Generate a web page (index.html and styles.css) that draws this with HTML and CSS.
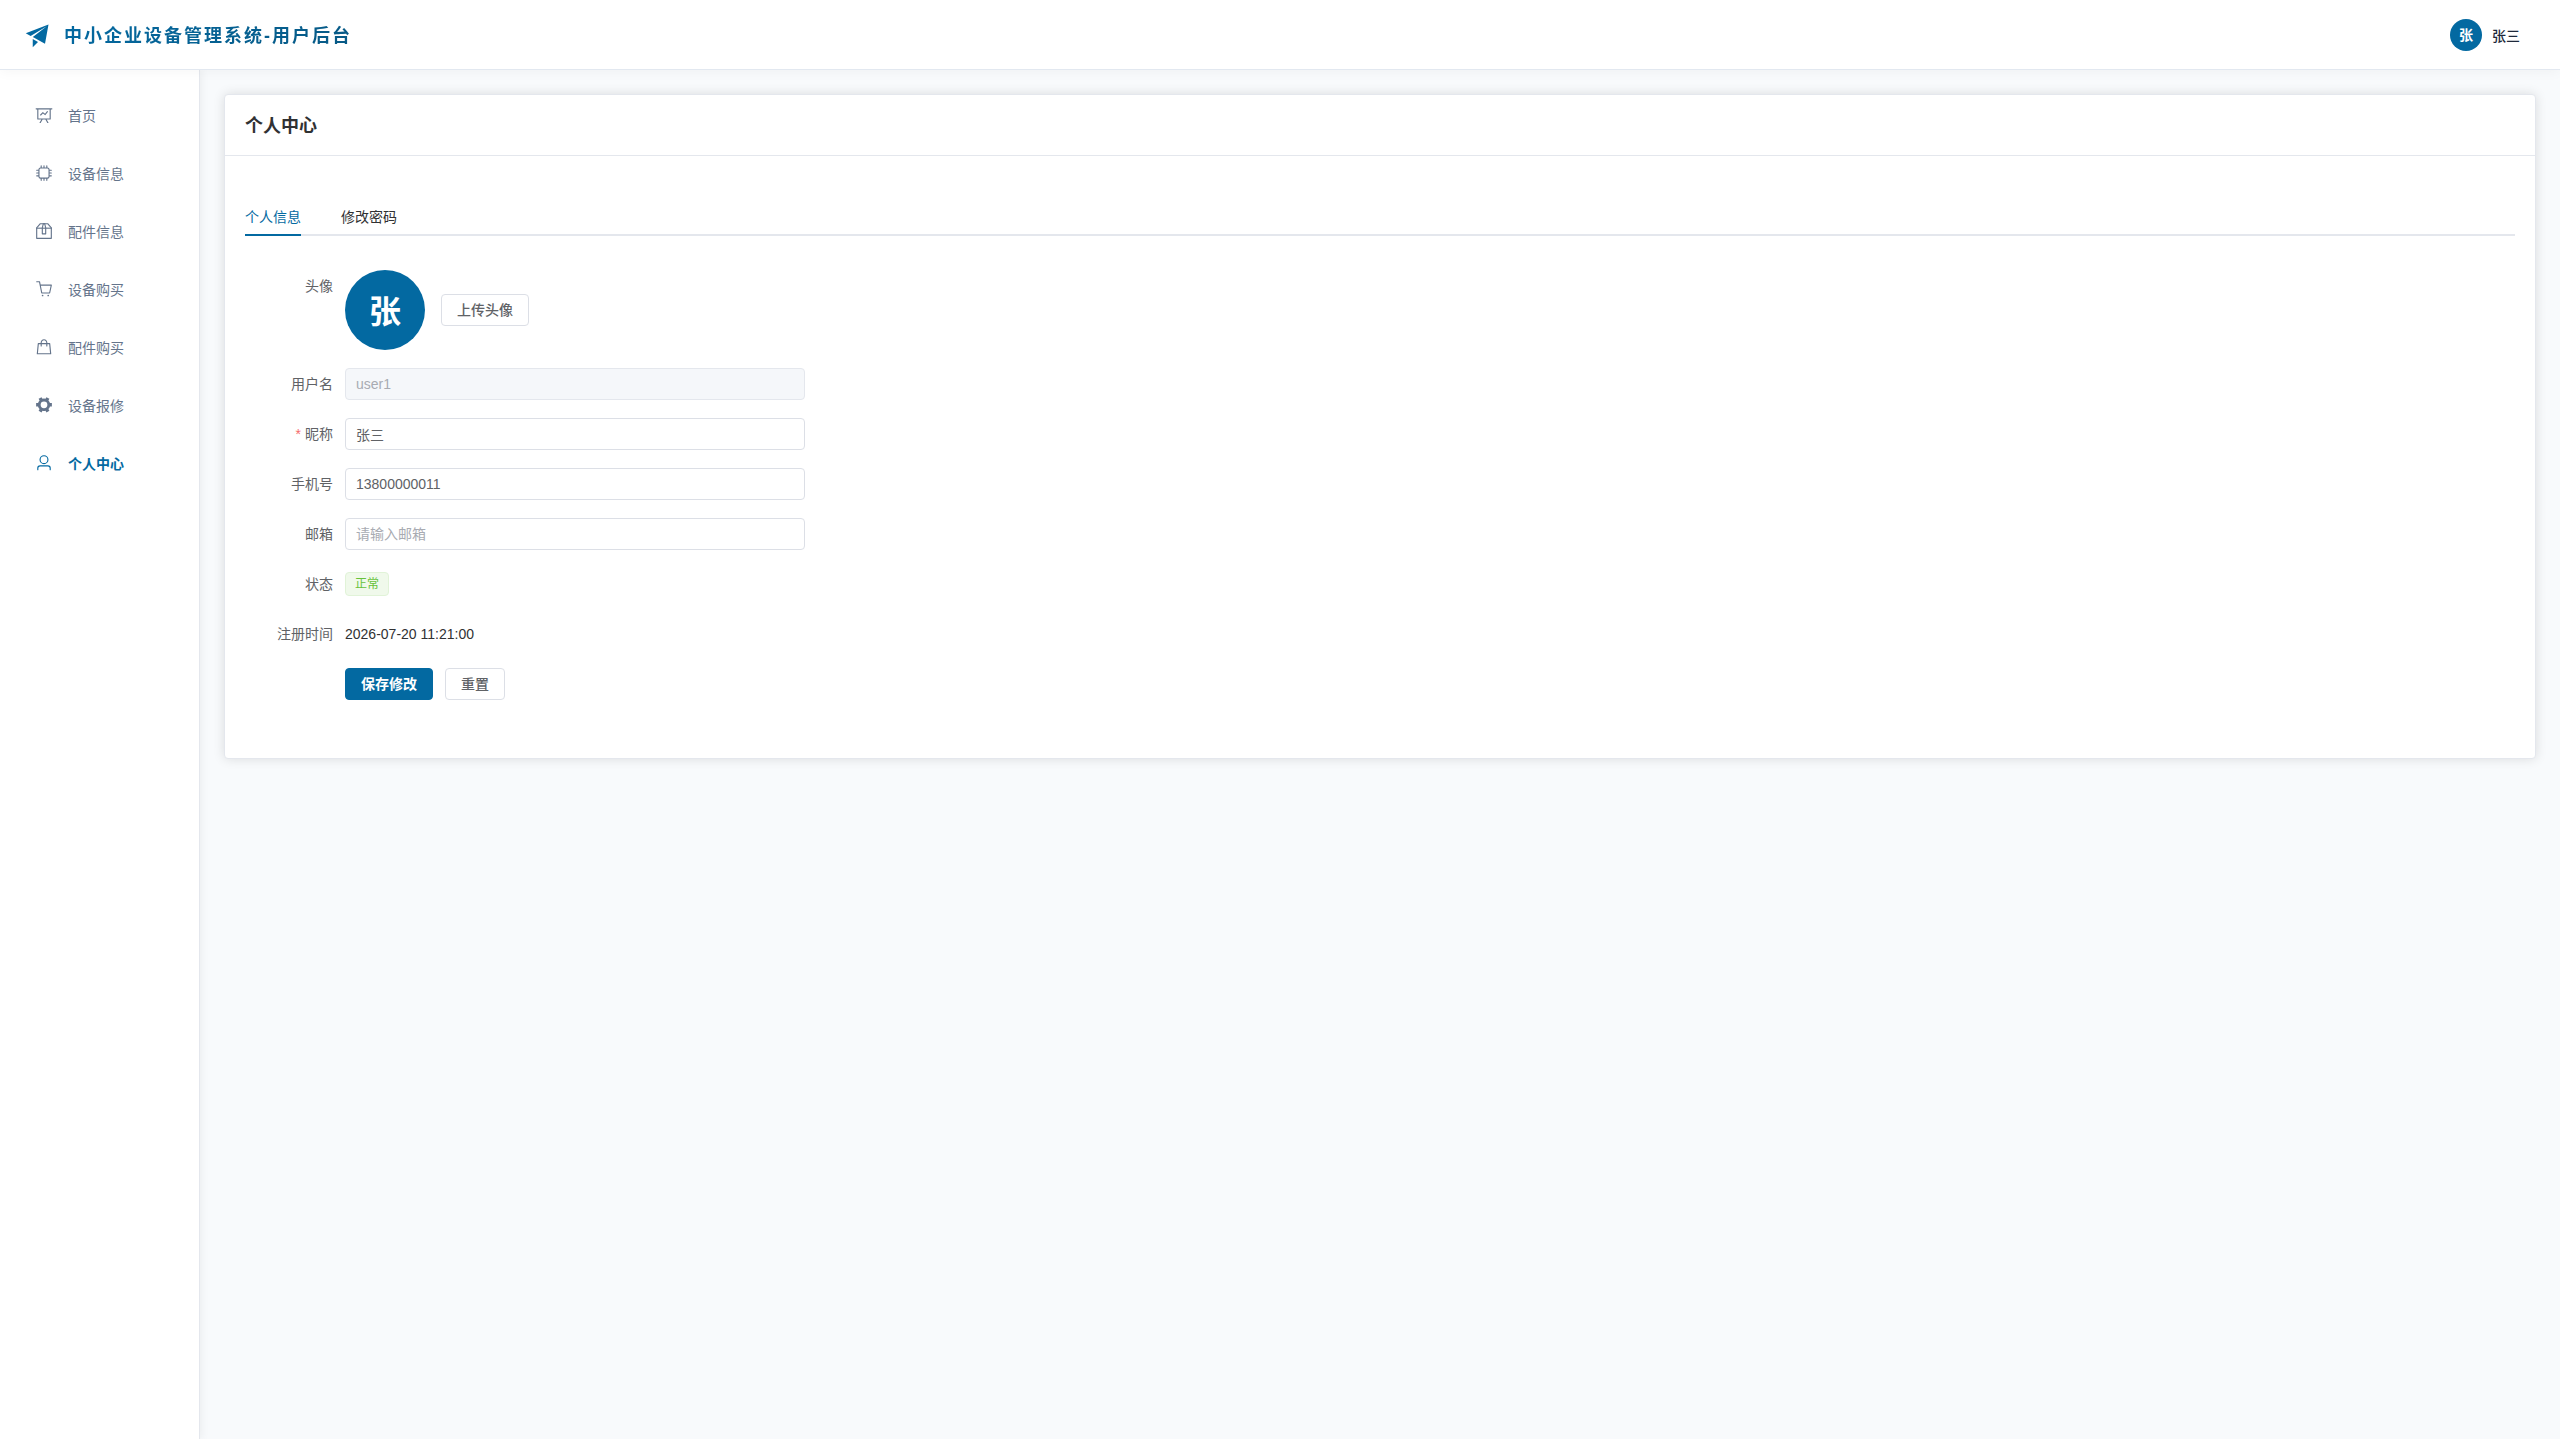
FILE: index.html
```html
<!DOCTYPE html>
<html lang="zh-CN">
<head>
    <meta charset="UTF-8">
    <meta name="viewport" content="width=device-width, initial-scale=1.0">
    <title>个人中心</title>
    <link rel="stylesheet" href="styles.css">
</head>
<body>
    <header class="header">
        <div class="logo">
            <svg class="logo-icon" viewBox="0 0 1024 1024"><path d="m64 448 832-320-128 704-446.08-243.328L832 192 242.816 545.536 64 448zm256 512V657.024L512 768 320 960z"/></svg>
            <span class="logo-text">中小企业设备管理系统-用户后台</span>
        </div>
        <button type="button" class="user">
            <span class="avatar">张</span>
            <span class="user-name">张三</span>
        </button>
    </header>

    <div class="layout">
        <nav class="sidebar">
            <a class="menu-item" href="#">
                <svg class="icon" viewBox="0 0 1024 1024"><path d="M359.168 768H160a32 32 0 0 1-32-32V192H64a32 32 0 0 1 0-64h896a32 32 0 1 1 0 64h-64v544a32 32 0 0 1-32 32H665.216l110.848 192h-73.856L591.36 768H433.024L322.176 960H248.32l110.848-192zM832 192H192v512h640V192zM342.656 534.656a32 32 0 1 1-45.312-45.312L444.992 341.76l125.44 94.08L679.04 300.032a32 32 0 1 1 49.92 39.936L581.632 524.224 451.008 426.24 342.656 534.592z"/></svg>
                <span>首页</span>
            </a>
            <a class="menu-item" href="#">
                <svg class="icon" viewBox="0 0 1024 1024"><path d="M320 256a64 64 0 0 0-64 64v384a64 64 0 0 0 64 64h384a64 64 0 0 0 64-64V320a64 64 0 0 0-64-64H320zm0-64h384a128 128 0 0 1 128 128v384a128 128 0 0 1-128 128H320a128 128 0 0 1-128-128V320a128 128 0 0 1 128-128z"/><path d="M512 64a32 32 0 0 1 32 32v128h-64V96a32 32 0 0 1 32-32zm160 0a32 32 0 0 1 32 32v128h-64V96a32 32 0 0 1 32-32zm-320 0a32 32 0 0 1 32 32v128h-64V96a32 32 0 0 1 32-32zm160 896a32 32 0 0 1-32-32V800h64v128a32 32 0 0 1-32 32zm160 0a32 32 0 0 1-32-32V800h64v128a32 32 0 0 1-32 32zm-320 0a32 32 0 0 1-32-32V800h64v128a32 32 0 0 1-32 32zM64 512a32 32 0 0 1 32-32h128v64H96a32 32 0 0 1-32-32zm0-160a32 32 0 0 1 32-32h128v64H96a32 32 0 0 1-32-32zm0 320a32 32 0 0 1 32-32h128v64H96a32 32 0 0 1-32-32zm896-160a32 32 0 0 1-32 32H800v-64h128a32 32 0 0 1 32 32zm0-160a32 32 0 0 1-32 32H800v-64h128a32 32 0 0 1 32 32zm0 320a32 32 0 0 1-32 32H800v-64h128a32 32 0 0 1 32 32z"/></svg>
                <span>设备信息</span>
            </a>
            <a class="menu-item" href="#">
                <svg class="icon" viewBox="0 0 1024 1024"><path d="M317.056 128 128 344.064V896h768V344.064L706.944 128H317.056zm-14.528-64h418.944a32 32 0 0 1 24.064 10.88l206.528 236.096A32 32 0 0 1 960 332.032V928a32 32 0 0 1-32 32H96a32 32 0 0 1-32-32V332.032a32 32 0 0 1 7.936-21.12L278.4 75.008A32 32 0 0 1 302.528 64z"/><path d="M64 320h896v64H64z"/><path d="M448 327.872V640h128V327.872L526.08 128h-28.16L448 327.872zM448 64h128l64 256v352a32 32 0 0 1-32 32H416a32 32 0 0 1-32-32V320l64-256z"/></svg>
                <span>配件信息</span>
            </a>
            <a class="menu-item" href="#">
                <svg class="icon" viewBox="0 0 1024 1024"><path d="M432 928a48 48 0 1 1 0-96 48 48 0 0 1 0 96zm320 0a48 48 0 1 1 0-96 48 48 0 0 1 0 96zM96 128a32 32 0 0 1 0-64h160a32 32 0 0 1 31.36 25.728L320.64 256H928a32 32 0 0 1 31.296 38.72l-96 448A32 32 0 0 1 832 768H384a32 32 0 0 1-31.36-25.728L229.76 128H96zm314.24 576h395.904l82.304-384H333.44l76.8 384z"/></svg>
                <span>设备购买</span>
            </a>
            <a class="menu-item" href="#">
                <svg class="icon" viewBox="0 0 1024 1024"><path d="M320 288v-22.336C320 154.688 405.504 64 512 64s192 90.688 192 201.664v22.4h131.072a32 32 0 0 1 31.808 28.8l57.6 576a32 32 0 0 1-31.808 35.2H131.328a32 32 0 0 1-31.808-35.2l57.6-576a32 32 0 0 1 31.808-28.8H320zm64 0h256v-22.336C640 189.248 582.272 128 512 128c-70.272 0-128 61.248-128 137.664v22.4zm-64 64H217.92l-51.2 512h690.56l-51.264-512H704v96a32 32 0 1 1-64 0v-96H384v96a32 32 0 0 1-64 0v-96z"/></svg>
                <span>配件购买</span>
            </a>
            <a class="menu-item" href="#">
                <svg class="icon" viewBox="0 0 1024 1024"><path d="M764.416 254.72a351.68 351.68 0 0 1 86.336 149.184H960v192.064H850.752a351.68 351.68 0 0 1-86.336 149.312l54.72 94.72-166.272 96-54.592-94.72a352.64 352.64 0 0 1-172.48 0L371.136 936l-166.272-96 54.72-94.72a351.68 351.68 0 0 1-86.336-149.312H64v-192h109.248a351.68 351.68 0 0 1 86.336-149.312L204.8 160l166.208-96h.192l54.656 94.592a352.64 352.64 0 0 1 172.48 0L652.8 64h.128L819.2 160l-54.72 94.72zM704 499.968a192 192 0 1 0-384 0 192 192 0 0 0 384 0z"/></svg>
                <span>设备报修</span>
            </a>
            <a class="menu-item active" href="#">
                <svg class="icon" viewBox="0 0 1024 1024"><path d="M512 512a192 192 0 1 0 0-384 192 192 0 0 0 0 384zm0 64a256 256 0 1 1 0-512 256 256 0 0 1 0 512zm320 320v-96a96 96 0 0 0-96-96H288a96 96 0 0 0-96 96v96a32 32 0 1 1-64 0v-96a160 160 0 0 1 160-160h448a160 160 0 0 1 160 160v96a32 32 0 1 1-64 0z"/></svg>
                <span>个人中心</span>
            </a>
        </nav>

        <main class="main">
            <section class="card">
                <h1 class="card-header">个人中心</h1>
                <div class="card-body">
                    <div class="tabs">
                        <button type="button" class="tab active">个人信息</button>
                        <button type="button" class="tab">修改密码</button>
                    </div>

                    <form class="form">
                        <div class="form-item">
                            <label class="label" for="upload">头像</label>
                            <div class="upload">
                                <span class="avatar avatar-large">张</span>
                                <button type="button" class="btn" id="upload">上传头像</button>
                            </div>
                        </div>
                        <div class="form-item">
                            <label class="label" for="username">用户名</label>
                            <input class="input" id="username" type="text" value="user1" disabled>
                        </div>
                        <div class="form-item">
                            <label class="label required" for="nickname">昵称</label>
                            <input class="input" id="nickname" type="text" value="张三">
                        </div>
                        <div class="form-item">
                            <label class="label" for="phone">手机号</label>
                            <input class="input" id="phone" type="text" value="13800000011">
                        </div>
                        <div class="form-item">
                            <label class="label" for="email">邮箱</label>
                            <input class="input" id="email" type="text" placeholder="请输入邮箱">
                        </div>
                        <div class="form-item">
                            <span class="label">状态</span>
                            <div class="content"><span class="tag">正常</span></div>
                        </div>
                        <div class="form-item">
                            <span class="label">注册时间</span>
                            <div class="content">2026-07-20 11:21:00</div>
                        </div>
                        <div class="form-item actions">
                            <button type="button" class="btn btn-primary">保存修改</button>
                            <button type="reset" class="btn">重置</button>
                        </div>
                    </form>
                </div>
            </section>
        </main>
    </div>
</body>
</html>
```
FILE: styles.css
```css
* {
    box-sizing: border-box;
}
body {
    display: flex;
    flex-direction: column;
    min-height: 100vh;
    margin: 0;
    background: #f8fafc;
    color: #303133;
    font-family: "Liberation Sans", "Noto Sans CJK SC", sans-serif;
    font-size: 14px;
}
button, input {
    font-family: inherit;
    font-size: 14px;
}
button {
    cursor: pointer;
}

/* header */
.header {
    display: flex;
    align-items: center;
    justify-content: space-between;
    position: relative;
    z-index: 2;
    height: 70px;
    padding: 0 24px;
    background: #fff;
    border-bottom: 1px solid #e2e8f0;
    box-shadow: 0 2px 12px rgba(0, 0, 0, 0.04);
}
.logo {
    display: flex;
    align-items: center;
    gap: 12px;
}
.logo-icon {
    width: 28px;
    height: 28px;
    fill: #0369a1;
}
.logo-text {
    padding-top: 2px;
    font-size: 18px;
    font-weight: 700;
    line-height: 28px;
    letter-spacing: 2px;
    color: transparent;
    background: linear-gradient(135deg, #0369a1, #075985);
    -webkit-background-clip: text;
    background-clip: text;
}
.user {
    display: flex;
    align-items: center;
    gap: 10px;
    padding: 0 16px;
    border: 0;
    background: none;
}
.user-name {
    color: #1e293b;
    font-weight: 500;
}
.avatar {
    display: flex;
    align-items: center;
    justify-content: center;
    width: 32px;
    height: 32px;
    padding-bottom: 2px;
    border-radius: 50%;
    background: #0369a1;
    color: #fff;
    font-weight: 700;
}
.avatar-large {
    width: 80px;
    height: 80px;
    font-size: 32px;
}

.layout {
    display: flex;
    flex: 1;
}

/* sidebar */
.sidebar {
    width: 200px;
    flex-shrink: 0;
    padding-top: 16px;
    background: #fff;
    border-right: 1px solid #e4e7ed;
    box-shadow: 2px 0 8px rgba(0, 0, 0, 0.05);
}
.menu-item {
    display: flex;
    align-items: center;
    gap: 15px;
    height: 58px;
    padding-left: 35px;
    color: #64748b;
    text-decoration: none;
}
.menu-item.active {
    color: #0369a1;
    font-weight: 700;
}
.icon {
    width: 18px;
    height: 18px;
    fill: currentColor;
}

/* card */
.main {
    flex: 1;
    padding: 24px;
}
.card {
    background: #fff;
    border: 1px solid #e4e7ed;
    border-radius: 4px;
    box-shadow: 0 0 12px rgba(0, 0, 0, 0.12);
}
.card-header {
    margin: 0;
    padding: 19px 20px 17px;
    border-bottom: 1px solid #e4e7ed;
    font-size: 18px;
    font-weight: 700;
    line-height: 24px;
}
.card-body {
    padding: 40px 20px;
}
.tabs {
    display: flex;
    gap: 40px;
    height: 40px;
    margin-bottom: 34px;
    box-shadow: inset 0 -2px #e4e7ed;
}
.tab {
    padding: 2px 0 0;
    border: 0;
    border-bottom: 2px solid transparent;
    background: none;
    color: #303133;
}
.tab.active {
    color: #0369a1;
    border-bottom-color: #0369a1;
}

/* form */
.form {
    max-width: 560px;
}
.form-item {
    display: flex;
    margin-bottom: 18px;
}
.label {
    width: 100px;
    flex-shrink: 0;
    padding-right: 12px;
    color: #606266;
    line-height: 32px;
    text-align: right;
}
.required::before {
    content: "*";
    margin-right: 4px;
    color: #f56c6c;
}
.upload {
    display: flex;
    align-items: center;
    gap: 16px;
}
.content {
    display: flex;
    align-items: center;
    height: 32px;
}
.input {
    flex: 1;
    height: 32px;
    padding: 0 10px;
    border: 1px solid #dcdfe6;
    border-radius: 4px;
    background: #fff;
    color: #606266;
}
.input::placeholder {
    color: #a8abb2;
}
.input:disabled {
    background: #f5f7fa;
    border-color: #e4e7ed;
    color: #a8abb2;
}
.tag {
    height: 24px;
    padding: 0 9px;
    border: 1px solid #e1f3d8;
    border-radius: 4px;
    background: #f0f9eb;
    color: #67c23a;
    font-size: 12px;
    line-height: 22px;
}
.btn {
    height: 32px;
    padding: 0 15px 2px;
    border: 1px solid #dcdfe6;
    border-radius: 4px;
    background: #fff;
    color: #606266;
    font-weight: 500;
}
.btn-primary {
    background: #0369a1;
    border-color: #0369a1;
    color: #fff;
    font-weight: 700;
}
.actions {
    gap: 12px;
    padding-left: 100px;
}
```
